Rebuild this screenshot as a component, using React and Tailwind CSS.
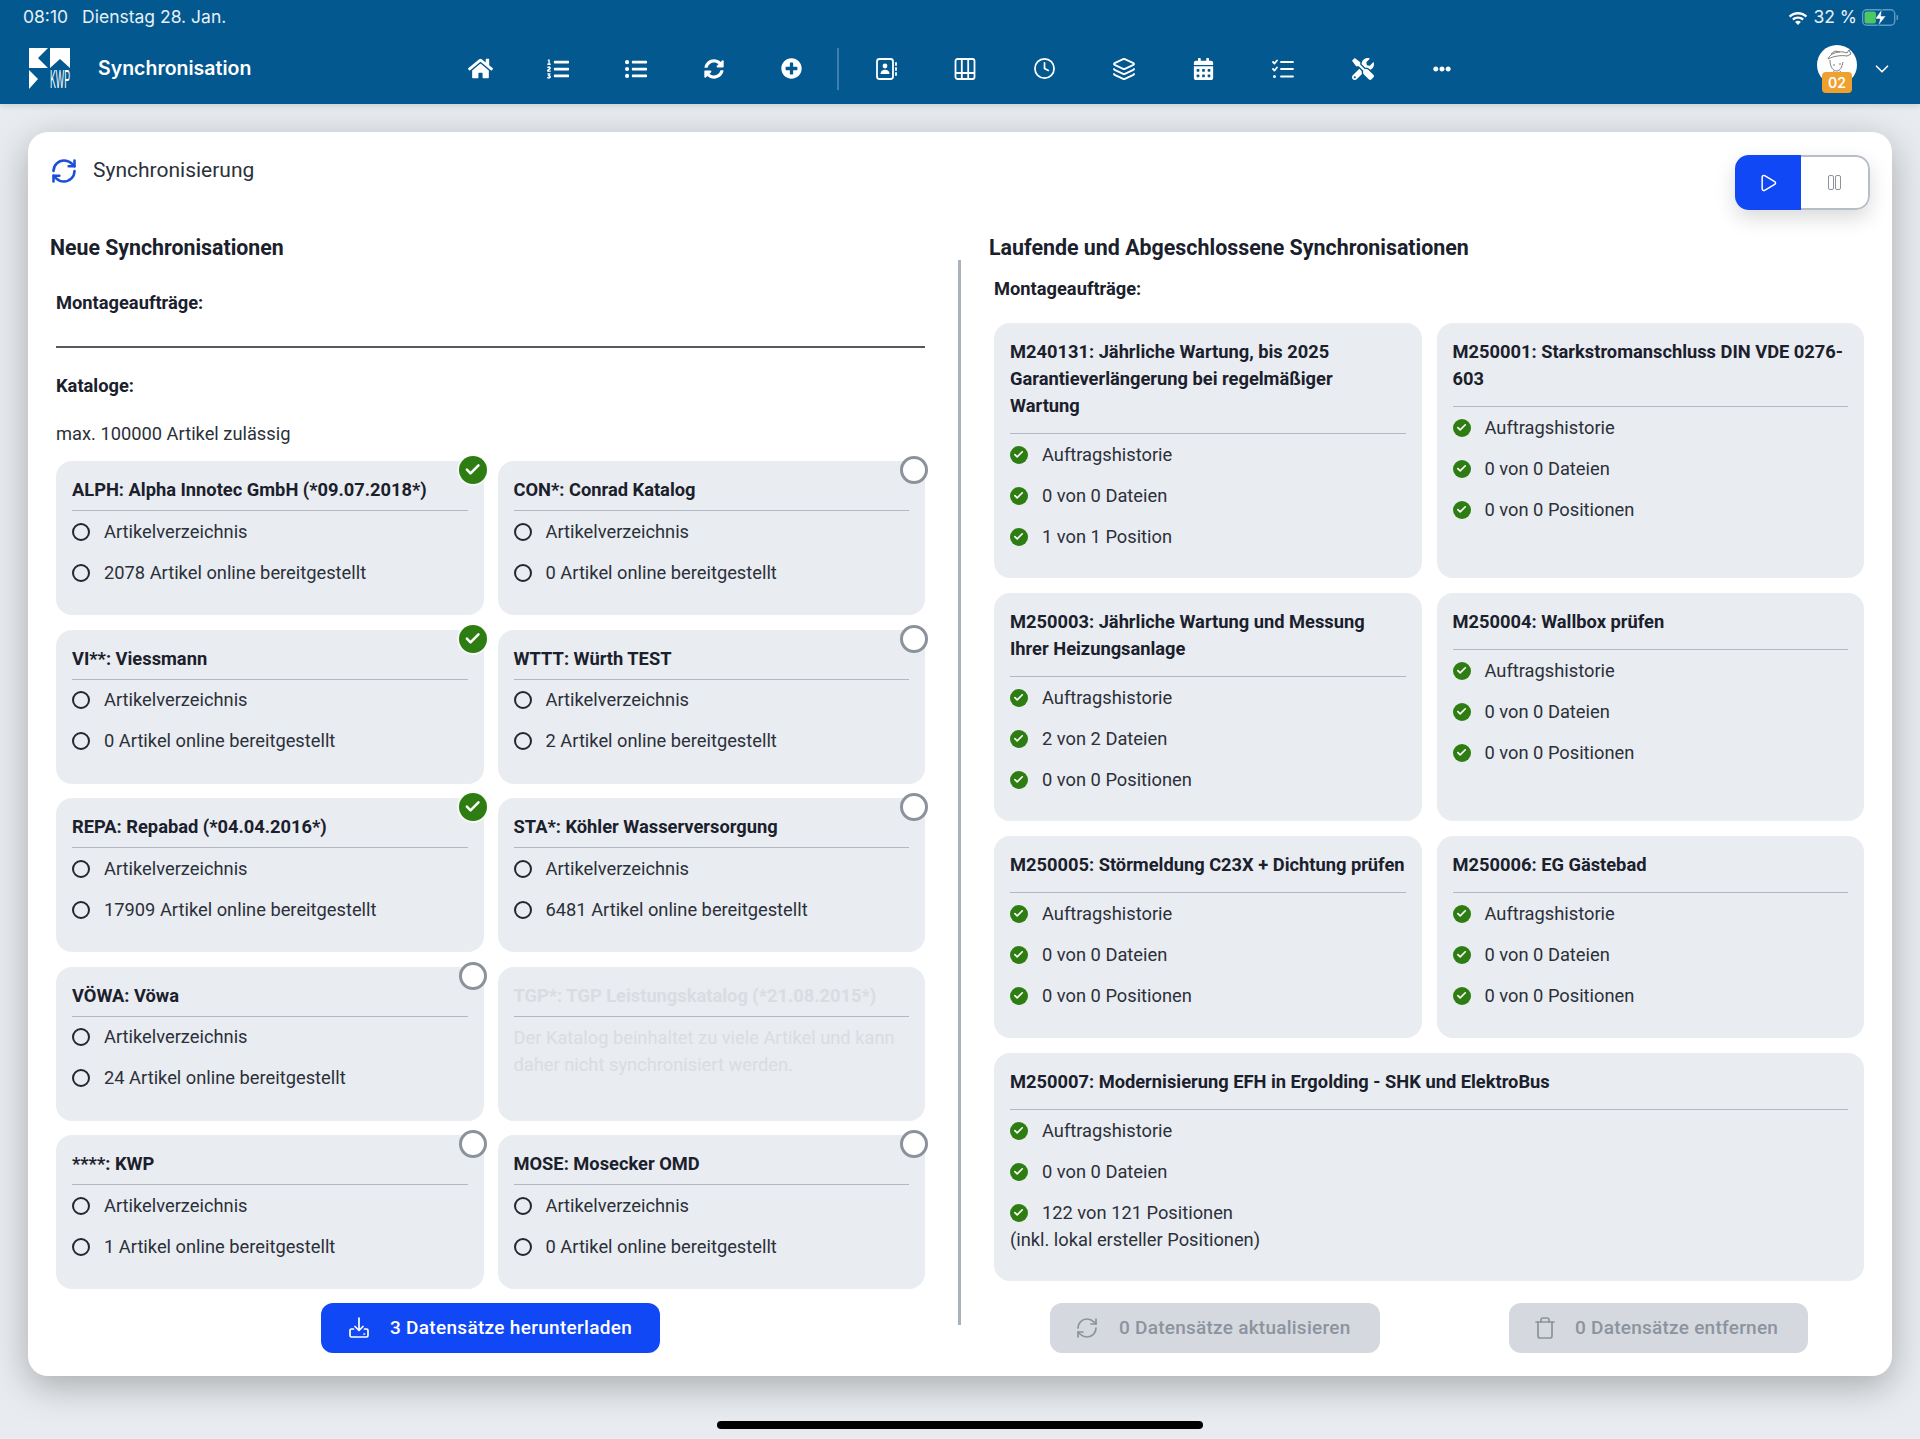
import { Check, ChevronDown, Clock, Layers, Play, RefreshCw, Trash } from 'lucide-react'
import { FaCalendarAlt, FaEllipsisH, FaHome, FaListOl, FaListUl, FaPlusCircle, FaSyncAlt, FaTools } from 'react-icons/fa'

const CATALOGS = [
  { title: 'ALPH: Alpha Innotec GmbH (*09.07.2018*)', count: 2078, selected: true },
  { title: 'CON*: Conrad Katalog', count: 0 },
  { title: 'VI**: Viessmann', count: 0, selected: true },
  { title: 'WTTT: Würth TEST', count: 2 },
  { title: 'REPA: Repabad (*04.04.2016*)', count: 17909, selected: true },
  { title: 'STA*: Köhler Wasserversorgung', count: 6481 },
  { title: 'VÖWA: Vöwa', count: 24 },
  { title: 'TGP*: TGP Leistungskatalog (*21.08.2015*)', disabled: true },
  { title: '****: KWP', count: 1 },
  { title: 'MOSE: Mosecker OMD', count: 0 },
]

const JOBS = [
  { title: 'M240131: Jährliche Wartung, bis 2025 Garantieverlängerung bei regelmäßiger Wartung', rows: ['Auftragshistorie', '0 von 0 Dateien', '1 von 1 Position'] },
  { title: 'M250001: Starkstromanschluss DIN VDE 0276-603', rows: ['Auftragshistorie', '0 von 0 Dateien', '0 von 0 Positionen'] },
  { title: 'M250003: Jährliche Wartung und Messung Ihrer Heizungsanlage', rows: ['Auftragshistorie', '2 von 2 Dateien', '0 von 0 Positionen'] },
  { title: 'M250004: Wallbox prüfen', rows: ['Auftragshistorie', '0 von 0 Dateien', '0 von 0 Positionen'] },
  { title: 'M250005: Störmeldung C23X + Dichtung prüfen', rows: ['Auftragshistorie', '0 von 0 Dateien', '0 von 0 Positionen'] },
  { title: 'M250006: EG Gästebad', rows: ['Auftragshistorie', '0 von 0 Dateien', '0 von 0 Positionen'] },
]

function Logo() {
  return (
    <svg viewBox="0 0 41 41" className="w-[41px] h-[41px] shrink-0 overflow-visible">
      <polygon fill="#fff" points="0,0 19,0 9,10 19,20 0,20" />
      <polygon fill="#fff" points="21,0 41,0 41,20 31,11 21,20" />
      <polygon fill="#fff" points="0,22 9,31 0,41" />
      <text x="21" y="40" fontSize="25" fill="#fff" textLength="20" lengthAdjust="spacingAndGlyphs" fontFamily="Liberation Sans, sans-serif">KWP</text>
    </svg>
  )
}

function AddressBook() {
  return (
    <svg viewBox="0 0 24 24" className="w-6 h-6" fill="none" stroke="currentColor" strokeWidth="1.8" strokeLinecap="round">
      <rect x="3" y="2" width="16" height="20" rx="2.5" />
      <path d="M22 6v2M22 11v2M22 16v2" />
      <circle cx="11" cy="9" r="2.4" fill="currentColor" stroke="none" />
      <path d="M6.5 17c0-3 2-4.2 4.5-4.2s4.5 1.2 4.5 4.2z" fill="currentColor" stroke="none" />
    </svg>
  )
}

function TableIcon() {
  return (
    <svg viewBox="0 0 24 24" className="w-6 h-6" fill="none" stroke="currentColor" strokeWidth="1.8">
      <rect x="2.5" y="2" width="19" height="20" rx="2" />
      <path d="M8.8 2v20M15.2 2v20M2.5 16h19" />
    </svg>
  )
}

function CheckList() {
  return (
    <svg viewBox="0 0 24 24" className="w-6 h-6" fill="none" stroke="currentColor" strokeWidth="1.8" strokeLinecap="round" strokeLinejoin="round">
      <path d="M2 5l1.5 1.500L6 3.500M2 12l1.500 1.500L6 10.500" />
      <circle cx="3.5" cy="19.5" r="0.6" />
      <path d="M10 5h12M10 12h12M10 19.500h12" />
    </svg>
  )
}

function TrayDownload({ className }) {
  return (
    <svg viewBox="0 0 24 24" className={className} fill="none" stroke="currentColor" strokeWidth="1.7" strokeLinecap="round" strokeLinejoin="round">
      <path d="M12 2v12M8 10.500l4 4 4-4" />
      <path d="M6.500 13H4.500a1.500 1.500 0 0 0-1.500 1.500v5A1.500 1.500 0 0 0 4.500 21h15a1.500 1.500 0 0 0 1.500-1.500v-5a1.500 1.500 0 0 0-1.500-1.500h-2" />
      <path d="M17 18h.5" />
    </svg>
  )
}

function StatusBar() {
  return (
    <div className="h-[33px] pt-[1px] flex items-center justify-between pl-[23px] pr-[21px] text-[17.5px] text-[#e6f0f7]">
      <div className="flex gap-[14px]">
        <span>08:10</span>
        <span>Dienstag 28. Jan.</span>
      </div>
      <div className="flex items-center gap-[5px]">
        <svg viewBox="0 0 20 15" className="w-[20px] h-[15px]" fill="#fff">
          <path d="M10 2C6.4 2 3.2 3.4 .8 5.7l1.6 1.7C4.4 5.500 7 4.400 10 4.400s5.600 1.100 7.600 3l1.600-1.700C16.800 3.400 13.600 2 10 2z" />
          <path d="M10 6.400c-2.300 0-4.300.9-5.900 2.300l1.600 1.700c1.100-1 2.600-1.600 4.300-1.600s3.200.6 4.300 1.600l1.600-1.700C14.300 7.300 12.300 6.400 10 6.400z" />
          <path d="M10 10.800c-1.100 0-2.100.4-2.900 1.100L10 15l2.900-3.100c-.8-.7-1.800-1.100-2.900-1.100z" />
        </svg>
        <span>32 %</span>
        <svg viewBox="0 0 37 17" className="w-[37px] h-[17px]">
          <rect x="0.7" y="0.7" width="32" height="15.6" rx="4" fill="none" stroke="#5d9bc6" strokeWidth="1.4" />
          <rect x="2.500" y="2.500" width="11.500" height="12" rx="2" fill="#4cc764" />
          <rect x="34.500" y="6" width="1.600" height="5" rx="0.8" fill="#5d9bc6" />
          <path d="M20 0l-7 10h5l-2 7 8-10h-5z" fill="#fff" stroke="#03588f" strokeWidth="0.6" />
        </svg>
      </div>
    </div>
  )
}

function NavSlot({ children, wide }) {
  return (
    <div className={`${wide ? 'w-[79.5px]' : 'w-[78px]'} flex justify-center items-center shrink-0 text-white`}>
      {children}
    </div>
  )
}

function NavBar() {
  return (
    <div className="h-[71px] flex items-center">
      <div className="w-[441px] pl-[29px] flex items-center gap-[28px] shrink-0">
        <Logo />
        <span className="text-[19.5px] font-semibold text-white">Synchronisation</span>
      </div>
      <NavSlot><FaHome className="w-[25px] h-[25px]" /></NavSlot>
      <NavSlot><FaListOl className="w-[22px] h-[22px]" /></NavSlot>
      <NavSlot><FaListUl className="w-[22px] h-[22px]" /></NavSlot>
      <NavSlot><FaSyncAlt className="w-[20px] h-[20px]" /></NavSlot>
      <NavSlot><FaPlusCircle className="w-[21px] h-[21px] -ml-[2px]" /></NavSlot>
      <div className="w-[2px] h-[42px] ml-[6px] mr-[7px] bg-[#3f7fae]" />
      <NavSlot wide><AddressBook /></NavSlot>
      <NavSlot wide><TableIcon /></NavSlot>
      <NavSlot wide><Clock className="w-[23px] h-[23px]" strokeWidth={1.8} /></NavSlot>
      <NavSlot wide><Layers className="w-6 h-6" strokeWidth={1.8} /></NavSlot>
      <NavSlot wide><FaCalendarAlt className="w-[21px] h-[22px]" /></NavSlot>
      <NavSlot wide><CheckList /></NavSlot>
      <NavSlot wide><FaTools className="w-[22px] h-[22px]" /></NavSlot>
      <NavSlot wide><FaEllipsisH className="w-[18px] h-[18px]" /></NavSlot>
      <div className="ml-auto pr-[27px] flex items-center gap-[14px]">
        <div className="relative w-[40px] h-[40px] rounded-full bg-white mt-[-8px]">
          <svg viewBox="0 0 40 40" className="w-full h-full" fill="none" stroke="#7d7d7d" strokeWidth="1">
            <path d="M11 14c2-6 12-9 19-6l2-3 2 4-4 2c-6-1-13 0-19 3zM13 15c0 7 3 11 7 11 3 0 5-4 6-9M17 26l-5 9M23 26l5 9M16 20h2M22 19h2M14 9l4-3 5 1" />
          </svg>
          <div className="absolute left-[5px] top-[27px] w-[30px] h-[21px] rounded-[4px] bg-[#f0a02f] text-white text-[14px] font-semibold flex items-center justify-center">
            02
          </div>
        </div>
        <ChevronDown className="w-[22px] h-[22px] text-white" strokeWidth={1.8} />
      </div>
    </div>
  )
}

function GreenCheck({ className }) {
  return (
    <span className={`rounded-full bg-[#2e7d13] flex items-center justify-center text-white shrink-0 ${className}`}>
      <Check className="w-[62%] h-[62%]" strokeWidth={3.5} />
    </span>
  )
}

function CatalogCard({ title, count, selected, disabled }) {
  return (
    <div className="relative h-[154px] rounded-[16px] bg-[#e9ecf0] px-4 pt-[15px]">
      {!disabled && (
        selected ? (
          <GreenCheck className="absolute -top-[5px] -right-[3px] w-[28px] h-[28px] ring-2 ring-white/60" />
        ) : (
          <span className="absolute -top-[5px] -right-[3px] w-[28px] h-[28px] rounded-full bg-white border-[3px] border-[#8b929c]" />
        )
      )}
      <div className={`h-[27px] text-[18.3px] leading-[27px] font-bold whitespace-nowrap ${disabled ? 'text-[#d9dce2]' : 'text-[#1a202c]'}`}>
        {title}
      </div>
      <div className="h-px mt-[7px] bg-[#b1b8c4]" />
      {disabled ? (
        <p className="mt-[7px] text-[18.3px] leading-[27px] text-[#d9dce2]">
          Der Katalog beinhaltet zu viele Artikel und kann daher nicht synchronisiert werden.
        </p>
      ) : (
        ['Artikelverzeichnis', `${count} Artikel online bereitgestellt`].map(label => (
          <div key={label} className="h-[41px] flex items-center gap-[14px] text-[18.3px] text-[#2b303a]">
            <span className="w-[18px] h-[18px] rounded-full border-2 border-[#23272f] shrink-0" />
            {label}
          </div>
        ))
      )}
    </div>
  )
}

function JobCard({ title, rows, note, wide }) {
  return (
    <div className={`rounded-[16px] bg-[#e9ecf0] px-4 pt-[15px] ${wide ? 'col-span-2' : ''}`}>
      <div className="text-[18.3px] leading-[27px] font-bold text-[#1a202c]">{title}</div>
      <div className="h-px mt-[14px] bg-[#b1b8c4]" />
      {rows.map(label => (
        <div key={label} className="h-[41px] flex items-center gap-[14px] text-[18.3px] text-[#2b303a]">
          <GreenCheck className="w-[18px] h-[18px]" />
          {label}
        </div>
      ))}
      {note && <div className="text-[18.3px] leading-[27px] -mt-[7px] text-[#2b303a]">{note}</div>}
    </div>
  )
}

function LeftColumn() {
  return (
    <div className="w-[875px] shrink-0">
      <h2 className="h-[34px] flex items-center text-[21.3px] font-bold text-[#1a202c]">Neue Synchronisationen</h2>
      <div className="pl-[6px]">
        <div className="mt-[26px] h-[24px] text-[18.3px] leading-[24px] font-bold text-[#1a202c]">Montageaufträge:</div>
        <div className="mt-[31px] h-[2px] w-[869px] bg-[#555a60]" />
        <div className="mt-[26px] h-[24px] text-[18.3px] leading-[24px] font-bold text-[#1a202c]">Kataloge:</div>
        <div className="mt-[24px] h-[24px] text-[18.3px] leading-[24px] text-[#2b303a]">max. 100000 Artikel zulässig</div>
        <div className="mt-[15px] w-[869px] grid grid-cols-2 gap-x-[14px] gap-y-[14.5px]">
          {CATALOGS.map(c => <CatalogCard key={c.title} {...c} />)}
        </div>
        <div className="mt-[14px] w-[869px] flex justify-center">
          <button className="w-[339px] h-[50px] rounded-[12px] bg-[#1148f5] text-white text-[19px] tracking-[0.3px] font-medium flex items-center pl-[26px] gap-[19px]">
            <TrayDownload className="w-[24px] h-[24px]" />
            3 Datensätze herunterladen
          </button>
        </div>
      </div>
    </div>
  )
}

function RightColumn() {
  return (
    <div className="ml-[31px] w-[875px] shrink-0">
      <h2 className="h-[34px] flex items-center text-[21.4px] font-bold text-[#1a202c]">Laufende und Abgeschlossene Synchronisationen</h2>
      <div className="pl-[5px]">
        <div className="mt-[12px] h-[24px] text-[18.3px] leading-[24px] font-bold text-[#1a202c]">Montageaufträge:</div>
        <div className="mt-[22px] grid grid-cols-2 gap-x-[15px] gap-y-[15px] grid-rows-[255px_228px_202px_228px]">
          {JOBS.map(j => <JobCard key={j.title} {...j} />)}
          <JobCard
            wide
            title="M250007: Modernisierung EFH in Ergolding - SHK und ElektroBus"
            rows={['Auftragshistorie', '0 von 0 Dateien', '122 von 121 Positionen']}
            note="(inkl. lokal ersteller Positionen)"
          />
        </div>
        <div className="mt-[22px] pl-[56px] flex gap-[129px]">
          <button className="w-[330px] h-[50px] rounded-[12px] bg-[#d5d8df] text-[#8c939e] text-[19px] tracking-[0.25px] font-medium flex items-center pl-[25px] gap-[20px]">
            <RefreshCw className="w-[24px] h-[24px]" strokeWidth={1.7} />
            0 Datensätze aktualisieren
          </button>
          <button className="w-[299px] h-[50px] rounded-[12px] bg-[#d5d8df] text-[#8c939e] text-[19px] tracking-[0.25px] font-medium flex items-center pl-[24px] gap-[18px]">
            <Trash className="w-[24px] h-[24px]" strokeWidth={1.7} />
            0 Datensätze entfernen
          </button>
        </div>
      </div>
    </div>
  )
}

export default function App() {
  return (
    <div className="relative h-[1439px] overflow-hidden bg-[#e8ebef] font-[Inter,sans-serif]">
      <header className="h-[104px] bg-[#03588f] shadow-[0_2px_6px_rgba(0,0,0,0.12)]">
        <StatusBar />
        <NavBar />
      </header>

      <main className="px-[28px] pt-[28px] font-[Roboto,sans-serif]">
        <div className="h-[1244px] rounded-[20px] bg-white shadow-[0_10px_36px_rgba(0,0,0,0.28)] pt-[23px] px-[22px]">
          <div className="h-[55px] flex justify-between items-start">
            <div className="h-[32px] flex items-center gap-[15px] text-[#1d4ed8]">
              <RefreshCw className="w-[28px] h-[28px]" strokeWidth={2.2} />
              <span className="text-[21px] text-[#2b303a]">Synchronisierung</span>
            </div>
            <div className="w-[135px] h-[55px] flex rounded-[14px] overflow-hidden shadow-[0_8px_20px_rgba(0,0,0,0.15)]">
              <div className="w-[66px] bg-[#1148f5] flex items-center justify-center text-white">
                <Play className="w-[20px] h-[20px]" strokeWidth={1.8} />
              </div>
              <div className="flex-1 rounded-r-[14px] border-2 border-l-0 border-[#b8bec8] bg-white flex items-center justify-center gap-[1px]">
                <span className="w-[6px] h-[15px] rounded-[2px] border-[1.5px] border-[#8c939e]" />
                <span className="w-[6px] h-[15px] rounded-[2px] border-[1.5px] border-[#8c939e]" />
              </div>
            </div>
          </div>

          <div className="mt-[21px] flex">
            <LeftColumn />
            <div className="w-[3px] shrink-0 mt-[29px] mb-[28px] ml-[33px] -mr-[3px] bg-[#aab3bd]" />
            <RightColumn />
          </div>
        </div>
      </main>

      {/* home indicator */}
      <div className="absolute left-1/2 -translate-x-1/2 bottom-[10px] w-[486px] h-[8px] rounded-full bg-black" />
    </div>
  )
}
